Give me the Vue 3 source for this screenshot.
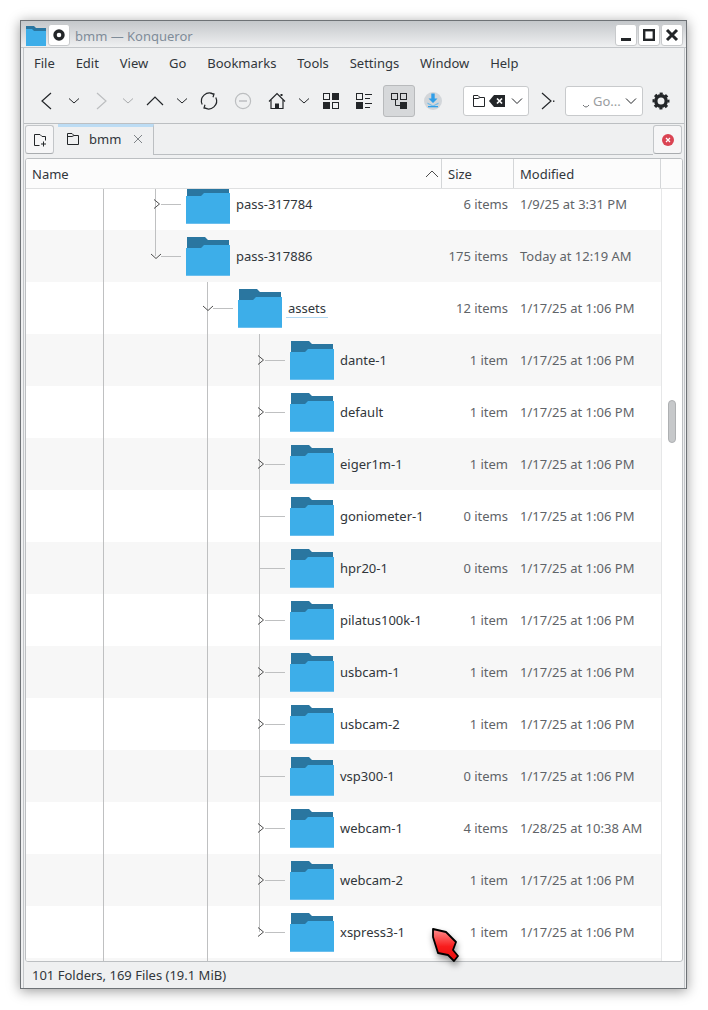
<script setup>
const menus = ['File', 'Edit', 'View', 'Go', 'Bookmarks', 'Tools', 'Settings', 'Window', 'Help']
const tools = [
  { icon: 'back', w: 28 }, { icon: 'drop', w: 26 }, { icon: 'forward', w: 27 }, { icon: 'dropOff', w: 27 },
  { icon: 'up', w: 28 }, { icon: 'drop', w: 26 }, { icon: 'reload', w: 28 }, { icon: 'stop', w: 40 },
  { icon: 'home', w: 28 }, { icon: 'drop', w: 26 }, { icon: 'icons', w: 28 }, { icon: 'details', w: 38 },
  { icon: 'tree', w: 32 }, { icon: 'download', w: 36 }
]
const rows = [
  { name: 'pass-317784', size: '6 items', date: '1/9/25 at 3:31 PM', depth: 0, exp: 'right' },
  { name: 'pass-317886', size: '175 items', date: 'Today at 12:19 AM', depth: 0, exp: 'down' },
  { name: 'assets', size: '12 items', date: '1/17/25 at 1:06 PM', depth: 1, exp: 'down', hover: true },
  { name: 'dante-1', size: '1 item', date: '1/17/25 at 1:06 PM', depth: 2, exp: 'right' },
  { name: 'default', size: '1 item', date: '1/17/25 at 1:06 PM', depth: 2, exp: 'right' },
  { name: 'eiger1m-1', size: '1 item', date: '1/17/25 at 1:06 PM', depth: 2, exp: 'right' },
  { name: 'goniometer-1', size: '0 items', date: '1/17/25 at 1:06 PM', depth: 2 },
  { name: 'hpr20-1', size: '0 items', date: '1/17/25 at 1:06 PM', depth: 2 },
  { name: 'pilatus100k-1', size: '1 item', date: '1/17/25 at 1:06 PM', depth: 2, exp: 'right' },
  { name: 'usbcam-1', size: '1 item', date: '1/17/25 at 1:06 PM', depth: 2, exp: 'right' },
  { name: 'usbcam-2', size: '1 item', date: '1/17/25 at 1:06 PM', depth: 2, exp: 'right' },
  { name: 'vsp300-1', size: '0 items', date: '1/17/25 at 1:06 PM', depth: 2 },
  { name: 'webcam-1', size: '4 items', date: '1/28/25 at 10:38 AM', depth: 2, exp: 'right' },
  { name: 'webcam-2', size: '1 item', date: '1/17/25 at 1:06 PM', depth: 2, exp: 'right' },
  { name: 'xspress3-1', size: '1 item', date: '1/17/25 at 1:06 PM', depth: 2, exp: 'right' }
]
</script>

<template>
  <div class="page">
  <div class="window">
    <header class="titlebar">
      <svg class="app-icon" viewBox="0 0 20 20" width="20" height="20">
        <path d="M0 0H8L10 2H20V8H0Z" fill="#2a76a0" />
        <path d="M0 3H6L8 5H20V20H0Z" fill="#3daee9" />
      </svg>
      <button class="wbtn pin">
        <svg viewBox="0 0 20 20" width="20" height="20"><circle cx="10" cy="10" r="4" fill="none" stroke="#232629" stroke-width="3.4" /></svg>
      </button>
      <span class="title">bmm — Konqueror</span>
      <div class="wbtns">
        <button class="wbtn">
          <svg viewBox="0 0 20 20" width="20" height="20"><rect x="5" y="13" width="10" height="3" fill="#232629" /></svg>
        </button>
        <button class="wbtn">
          <svg viewBox="0 0 20 20" width="20" height="20"><rect x="5.2" y="5.2" width="9.6" height="9.6" fill="none" stroke="#232629" stroke-width="2.4" /></svg>
        </button>
        <button class="wbtn">
          <svg viewBox="0 0 20 20" width="20" height="20"><path d="M5 5L15 15M15 5L5 15" stroke="#232629" stroke-width="3" /></svg>
        </button>
      </div>
    </header>

    <div class="body">
      <nav class="menubar">
        <span v-for="m in menus" :key="m">{{ m }}</span>
      </nav>

      <div class="toolbar">
        <div
          v-for="(t, i) in tools"
          :key="i"
          class="tool"
          :class="{ active: t.icon === 'tree' }"
          :style="{ width: t.w + 'px' }"
        >
          <svg viewBox="0 0 24 24" width="24" height="24" fill="none" stroke="#232629" stroke-width="1">
            <polyline v-if="t.icon === 'back'" points="16,4 7,12 16,20" stroke-width="1.2" />
            <polyline v-else-if="t.icon === 'drop'" points="7,9.5 12,14 17,9.5" />
            <polyline v-else-if="t.icon === 'forward'" points="8,4 17,12 8,20" stroke="#bcbec0" stroke-width="1.2" />
            <polyline v-else-if="t.icon === 'dropOff'" points="7,9.5 12,14 17,9.5" stroke="#a9abad" />
            <polyline v-else-if="t.icon === 'up'" points="4,16 12,8 20,16" stroke-width="1.2" />
            <g v-else-if="t.icon === 'reload'" stroke-width="1.2">
              <path d="M5.2 15.5A8 8 0 0 1 16.5 5.2" />
              <path d="M18.8 8.5A8 8 0 0 1 7.5 18.8" />
              <path d="M13.5 4.5L17 5L16 8.2M10.5 19.5L7 19L8 15.8" />
            </g>
            <g v-else-if="t.icon === 'stop'" stroke="#bcbec0" stroke-width="1.2">
              <circle cx="12" cy="12" r="7.6" />
              <path d="M8 12H16" stroke-width="1.5" />
            </g>
            <g v-else-if="t.icon === 'home'" stroke-width="1.2">
              <path d="M4 12.5L12 4.5L20 12.5" />
              <path d="M6 11V19.5H18V11" />
              <rect x="10" y="14.5" width="4" height="5" fill="#232629" stroke="none" />
              <rect x="15.5" y="5" width="2" height="2" fill="#232629" stroke="none" />
            </g>
            <g v-else-if="t.icon === 'icons'">
              <rect x="4.5" y="4.5" width="6" height="6" />
              <rect x="13" y="4" width="7" height="7" fill="#232629" stroke="none" />
              <rect x="4" y="13" width="7" height="7" fill="#232629" stroke="none" />
              <rect x="13.5" y="13.5" width="6" height="6" />
            </g>
            <g v-else-if="t.icon === 'details'">
              <rect x="4.5" y="4.5" width="6" height="6" />
              <rect x="4" y="13" width="7" height="7" fill="#232629" stroke="none" />
              <path d="M13 5.5H20M13 9.5H18M13 14.5H20M13 18.5H18" />
            </g>
            <g v-else-if="t.icon === 'tree'">
              <rect x="4.5" y="4.5" width="6" height="6" />
              <rect x="13.5" y="4.5" width="6" height="6" />
              <rect x="13" y="13" width="7" height="7" fill="#232629" stroke="none" />
              <path d="M8.5 10.5V16.5H13" />
            </g>
            <g v-else-if="t.icon === 'download'" stroke="none">
              <circle cx="12" cy="12" r="9" fill="#d2d6da" />
              <path d="M10.3 4.5H13.7V9.5H16.5L12 14L7.5 9.5H10.3Z" fill="#2f9ee8" />
              <path d="M6.5 13.5L12 16.5L17.5 13.5V15L12 17.5L6.5 15Z" fill="#6fbcec" />
              <rect x="7" y="17" width="10" height="1.3" fill="#2f9ee8" />
            </g>
          </svg>
        </div>

        <div class="combo first">
          <svg viewBox="0 0 14 14" width="14" height="14" fill="none" stroke="#232629" stroke-width="1">
            <path d="M1.5 1.5H6L8 3.5H12.5V12.5H1.5Z" />
            <path d="M1.5 4.5H6L8 3.5" />
          </svg>
          <svg class="bksp" viewBox="0 0 16 12" width="16" height="12">
            <path d="M5 0H16V12H5L0 6Z" fill="#232629" />
            <path d="M8 3.5L13 8.5M13 3.5L8 8.5" stroke="#fff" stroke-width="1.7" />
          </svg>
          <svg class="chev" viewBox="0 0 12 8" width="12" height="8" fill="none" stroke="#232629"><polyline points="1,1.5 6,6.5 11,1.5" /></svg>
        </div>

        <div class="tool go-sep">
          <svg viewBox="0 0 24 24" width="24" height="24" fill="none" stroke="#232629" stroke-width="1.2">
            <polyline points="7,4 16,12 7,20" />
            <rect x="18" y="11.5" width="1.4" height="1.4" fill="#232629" stroke="none" />
          </svg>
        </div>

        <div class="combo second">
          <svg class="breve" viewBox="0 0 8 5" width="8" height="5" fill="none" stroke="#6b6e71"><path d="M1 1Q4 5 7 1" /></svg>
          <span class="go">Go...</span>
          <svg class="chev" viewBox="0 0 12 8" width="12" height="8" fill="none" stroke="#232629"><polyline points="1,1.5 6,6.5 11,1.5" /></svg>
        </div>

        <div class="tool gear">
          <svg viewBox="0 0 24 24" width="24" height="24" fill="none" stroke="#232629">
            <circle cx="12" cy="12" r="5.2" stroke-width="3.4" />
            <circle cx="12" cy="12" r="7.4" stroke-width="2.2" stroke-dasharray="3.1 2.71" stroke-dashoffset="1.55" />
          </svg>
        </div>
      </div>

      <div class="tabbar">
        <button class="tabbtn">
          <svg viewBox="0 0 14 14" width="14" height="14" fill="none" stroke="#232629" stroke-width="1">
            <path d="M6.5 12.5H1.5V1.5H7L9 3.5H12.5V7.5" />
            <path d="M10.5 8.5V13.5M8 11H13" />
          </svg>
        </button>
        <div class="tab">
          <svg viewBox="0 0 14 14" width="14" height="14" fill="none" stroke="#232629" stroke-width="1">
            <path d="M1.5 1.5H6L8 3.5H12.5V12.5H1.5Z" />
            <path d="M1.5 4.5H6L8 3.5" />
          </svg>
          <span class="tab-label">bmm</span>
          <svg class="tab-x" viewBox="0 0 10 10" width="10" height="10"><path d="M1 1L9 9M9 1L1 9" stroke="#7f8488" stroke-width="1" /></svg>
        </div>
        <div class="tabfill"></div>
        <button class="tabbtn closebtn">
          <svg viewBox="0 0 14 14" width="14" height="14">
            <circle cx="7" cy="7" r="6" fill="#da4453" />
            <path d="M5 5L9 9M9 5L5 9" stroke="#fff" stroke-width="1.2" />
          </svg>
        </button>
      </div>

      <div class="frame">
        <div class="headrow">
          <div class="hcell hname">
            <span>Name</span>
            <svg viewBox="0 0 14 8" width="14" height="8" fill="none" stroke="#4d4d4d"><polyline points="1,7 7,1 13,7" /></svg>
          </div>
          <div class="hcell">Size</div>
          <div class="hcell">Modified</div>
          <div class="hrest"></div>
        </div>
        <div class="viewport">
          <div class="tree">
            <i class="vline v0"></i>
            <i class="vline v1"></i>
            <i class="vline v2"></i>
            <i class="vline v3"></i>
            <div v-for="r in rows" :key="r.name" class="row">
              <div class="name-cell" :class="'d' + r.depth">
                <span class="twig" :class="{ leaf: !r.exp }">
                  <svg v-if="r.exp" class="exp" viewBox="0 0 16 16" width="16" height="16" fill="none" stroke="#4d4d4d">
                    <polyline v-if="r.exp === 'right'" points="7,3.5 12.5,8 7,12.5" />
                    <polyline v-else points="4,6 9,10.5 14,6" />
                  </svg>
                </span>
                <svg class="folder" viewBox="0 0 44 40" width="44" height="40">
                  <path d="M1 0H19L22 3H43V12H1Z" fill="#2a76a0" />
                  <path d="M0 11H15L18 8H44V39H0Z" fill="#3daee9" />
                  <path d="M0 38H44V39H0Z" fill="#6bbfee" />
                </svg>
                <span class="label" :class="{ hover: r.hover }">{{ r.name }}</span>
              </div>
              <div class="size-cell">{{ r.size }}</div>
              <div class="date-cell">{{ r.date }}</div>
            </div>
          </div>
          <div class="scroll"><div class="thumb"></div></div>
        </div>
      </div>

      <footer class="status">101 Folders, 169 Files (19.1 MiB)</footer>
    </div>

    <svg class="cursor" viewBox="0 0 32 38" width="32" height="38">
      <defs>
        <linearGradient id="cur" x1="0" y1="0" x2="0" y2="1">
          <stop offset="0" stop-color="#ff9090" />
          <stop offset="0.55" stop-color="#f81c1c" />
          <stop offset="1" stop-color="#e80d0d" />
        </linearGradient>
      </defs>
      <path d="M2 2L15 5L25 15L22 23L27 29L23 34L17 28L7 26L2 10Z" fill="url(#cur)" stroke="#000" stroke-width="1.8" stroke-linejoin="round" />
    </svg>
  </div>
  </div>
</template>

<style>
html, body {
  background: #fff;
  margin: 0;
}
</style>

<style scoped>
.page {
  box-sizing: border-box;
  height: 1010px;
  padding: 20px 0 0 20px;
  overflow: hidden;
}
.window {
  position: relative;
  box-sizing: border-box;
  width: 667px;
  height: 969px;
  border: 1px solid #6e7276;
  padding: 0 1px 0 2px;
  background: #eff0f1;
  box-shadow: 0 2px 12px rgba(0, 0, 0, 0.4);
  font-family: "Noto Sans", sans-serif;
  font-size: 13px;
  color: #31363b;
  display: flex;
  flex-direction: column;
}
button {
  font: inherit;
  padding: 0;
}
.titlebar {
  height: 24px;
  margin: 0 -1px 0 -2px;
  padding: 2px 3px 0 5px;
  flex: none;
  display: flex;
  align-items: center;
  background: linear-gradient(#c4c7ca, #eff0f1);
  border-bottom: 1px solid #c3c6c9;
}
.app-icon {
  flex: none;
  margin-top: 2px;
}
.wbtn {
  box-sizing: border-box;
  width: 22px;
  height: 22px;
  border: 1px solid #c8cacc;
  border-radius: 3px;
  background: #fff;
  display: flex;
  align-items: center;
  justify-content: center;
}
.pin {
  margin-left: 2px;
}
.title {
  margin: 2px 0 0 5px;
  color: #7f8c99;
}
.wbtns {
  margin-left: auto;
  display: flex;
  gap: 1px;
}
.body {
  flex: 1;
  min-height: 0;
  display: flex;
  flex-direction: column;
  border-left: 1px solid #c3c6c9;
  border-right: 1px solid #c3c6c9;
}
.menubar {
  height: 30px;
  flex: none;
  display: flex;
  align-items: center;
  gap: 20.85px;
  padding-left: 10px;
}
.toolbar {
  height: 45px;
  flex: none;
  display: flex;
  align-items: center;
  padding-left: 9px;
  border-bottom: 1px solid #bcbfc2;
}
.tool {
  height: 32px;
  flex: none;
  box-sizing: border-box;
  display: flex;
  align-items: center;
  justify-content: center;
}
.tool.active {
  background: #d6d8da;
  border: 1px solid #b8babc;
  border-radius: 3px;
}
.go-sep,
.gear {
  width: 36px;
}
.combo {
  box-sizing: border-box;
  height: 30px;
  flex: none;
  display: flex;
  align-items: center;
  background: #fff;
  border: 1px solid #c8cacc;
  border-radius: 3px;
}
.combo.first {
  width: 66px;
  margin-left: 12px;
  padding-left: 8px;
}
.bksp {
  margin-left: 3px;
}
.combo .chev {
  margin-left: auto;
  margin-right: 5px;
}
.combo.second {
  width: 78px;
  padding-left: 16px;
}
.breve {
  margin-top: 11px;
}
.go {
  margin-left: 3px;
  color: #9a9da0;
}
.tabbar {
  height: 31px;
  flex: none;
  display: flex;
  align-items: stretch;
  box-sizing: border-box;
  padding-left: 1px;
  margin-bottom: 3px;
}
.tabbtn {
  box-sizing: border-box;
  width: 29px;
  height: 29px;
  margin-top: 1px;
  background: #f6f6f7;
  border: 1px solid #c3c6c9;
  border-bottom-color: #a9acaf;
  border-radius: 3px;
  display: flex;
  align-items: center;
  justify-content: center;
}
.tab {
  box-sizing: border-box;
  width: 96px;
  margin-left: 4px;
  display: flex;
  align-items: center;
  padding: 0 0 5px 8px;
  background: #eff0f1;
  border-top: 3px solid #bcdcf4;
  border-right: 1px solid #bcbfc2;
}
.tab-label {
  margin-left: 9px;
}
.tab-x {
  margin-left: 12px;
}
.tabfill {
  flex: 1;
  border-bottom: 1px solid #bcbfc2;
}
.closebtn {
  margin-right: 2px;
}
.frame {
  box-sizing: border-box;
  margin: 0 1px;
  height: 804px;
  flex: none;
  border: 1px solid #bcbfc2;
  border-radius: 3px;
  background: #fff;
  overflow: hidden;
  display: flex;
  flex-direction: column;
}
.headrow {
  height: 30px;
  flex: none;
  box-sizing: border-box;
  display: grid;
  grid-template-columns: 416px 72px 147px 1fr;
  background: #fcfcfc;
  border-bottom: 1px solid #dfe0e1;
}
.hcell {
  box-sizing: border-box;
  display: flex;
  align-items: center;
  padding-left: 6px;
  border-right: 1px solid #d4d6d8;
}
.hname {
  justify-content: space-between;
  padding-right: 2px;
}
.viewport {
  flex: 1;
  min-height: 0;
  display: flex;
}
.tree {
  position: relative;
  width: 635px;
  flex: none;
  overflow: hidden;
  background: #f7f7f7;
}
.vline {
  position: absolute;
  width: 1px;
  background: #bfc0c1;
  z-index: 1;
}
.v0 { left: 77px; top: 0; bottom: 0; }
.v1 { left: 129px; top: 0; height: 67px; }
.v2 { left: 181px; top: 93px; bottom: 0; }
.v3 { left: 233px; top: 145px; height: 598px; }
.row {
  height: 52px;
  display: grid;
  grid-template-columns: 416px 72px 147px;
  align-items: center;
  background: #fff;
}
.row:first-of-type {
  margin-top: -11px;
}
.row:nth-of-type(even) {
  background: #f7f7f7;
}
.name-cell {
  display: flex;
  align-items: center;
  height: 100%;
}
.d0 { padding-left: 129px; }
.d1 { padding-left: 181px; }
.d2 { padding-left: 233px; }
.twig {
  position: relative;
  z-index: 2;
  flex: none;
  width: 26px;
  height: 1px;
  margin-right: 5px;
  background: linear-gradient(#bfc0c1, #bfc0c1) no-repeat 6px 0 / 20px 1px;
}
.twig.leaf {
  background-size: 26px 1px;
  background-position: 0 0;
}
.exp {
  position: absolute;
  left: -8px;
  top: -8px;
}
.folder {
  flex: none;
  margin-top: 1px;
}
.label {
  position: relative;
  margin-left: 6px;
}
.label.hover::after {
  content: "";
  position: absolute;
  left: -2px;
  right: -2px;
  bottom: -1px;
  height: 1px;
  background: #b3d9f3;
}
.size-cell {
  text-align: right;
  padding-right: 6px;
  color: #5f6468;
}
.date-cell {
  padding-left: 6px;
  color: #5f6468;
  white-space: nowrap;
}
.scroll {
  flex: 1;
  position: relative;
  border-left: 1px solid #e6e7e8;
}
.thumb {
  box-sizing: border-box;
  position: absolute;
  left: 6px;
  top: 211px;
  width: 8px;
  height: 43px;
  border-radius: 4px;
  background: #c6c8ca;
  border: 1px solid #aeb0b2;
}
.status {
  flex: 1;
  display: flex;
  align-items: center;
  padding-left: 8px;
}
.cursor {
  position: absolute;
  left: 410px;
  top: 906px;
  filter: drop-shadow(1px 4px 3px rgba(0, 0, 0, 0.4));
}
</style>
